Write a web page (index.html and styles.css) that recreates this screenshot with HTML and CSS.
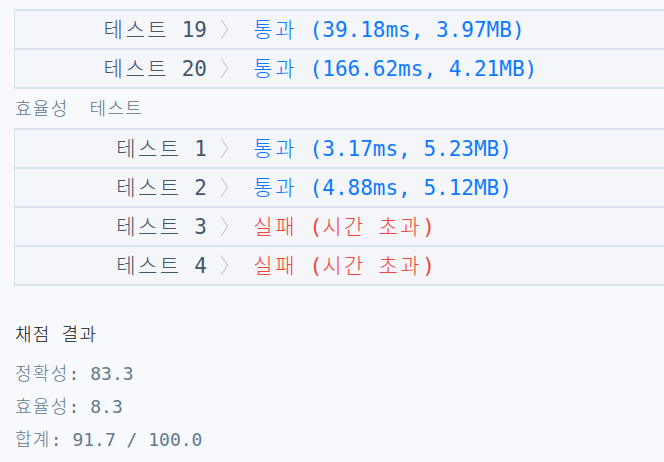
FILE: index.html
```html
<!DOCTYPE html>
<html lang="ko">
<head>
<meta charset="utf-8">
<link rel="stylesheet" href="styles.css">
</head>
<body>
<div class="page">
  <div class="panel first">
    <div class="row"><span class="label"><span class="k">테스트</span> 19</span><span class="res"> <span class="arrow">〉</span> <span class="pass"><span class="k">통과</span> (39.18ms, 3.97MB)</span></span></div>
    <div class="row"><span class="label"><span class="k">테스트</span> 20</span><span class="res"> <span class="arrow">〉</span> <span class="pass"><span class="k">통과</span> (166.62ms, 4.21MB)</span></span></div>
  </div>
  <div class="caption"><span class="k">효율성</span><span class="k">테스트</span></div>
  <div class="panel">
    <div class="row"><span class="label"><span class="k">테스트</span> 1</span><span class="res"> <span class="arrow">〉</span> <span class="pass"><span class="k">통과</span> (3.17ms, 5.23MB)</span></span></div>
    <div class="row"><span class="label"><span class="k">테스트</span> 2</span><span class="res"> <span class="arrow">〉</span> <span class="pass"><span class="k">통과</span> (4.88ms, 5.12MB)</span></span></div>
    <div class="row"><span class="label"><span class="k">테스트</span> 3</span><span class="res"> <span class="arrow">〉</span> <span class="fail"><span class="k">실패</span> (<span class="k">시간</span> <span class="k">초과</span>)</span></span></div>
    <div class="row"><span class="label"><span class="k">테스트</span> 4</span><span class="res"> <span class="arrow">〉</span> <span class="fail"><span class="k">실패</span> (<span class="k">시간</span> <span class="k">초과</span>)</span></span></div>
  </div>
  <div class="summary-title"><span class="k">채점</span> <span class="k">결과</span></div>
  <div class="score"><span class="k">정확성</span>: 83.3</div>
  <div class="score"><span class="k">효율성</span>: 8.3</div>
  <div class="score"><span class="k">합계</span>: 91.7 / 100.0</div>
</div>
</body>
</html>
```

FILE: styles.css
```css
html, body {
  margin: 0;
  padding: 0;
  background: #f8f9fc;
  overflow: hidden;
}
body {
  font-family: "DejaVu Sans Mono", "Noto Sans CJK KR", monospace;
}
.page {
  padding-left: 14px;
}
.panel {
  border-top: 2px solid #d7e2eb;
  border-left: 1px solid #d7e2eb;
  background: #f5f6fa;
}
.panel.first {
  margin-top: 9px;
}
.row {
  display: flex;
  align-items: center;
  height: 34px;
  padding-bottom: 3px;
  border-bottom: 2px solid #d7e2eb;
  font-size: 21px;
  white-space: pre;
}
.row .k {
  letter-spacing: 2.5px;
  font-weight: 300;
}
.label {
  width: 192px;
  text-align: right;
  color: #44566b;
  flex: none;
}
.arrow {
  color: #c3c8cf;
  font-weight: 300;
}
.pass {
  color: #0c7aff;
}
.fail {
  color: #f2453a;
}
.caption {
  height: 39px;
  line-height: 39px;
  font-size: 18px;
  color: #5b7587;
  display: flex;
  gap: 21px;
  padding-left: 1px;
}
.caption .k,
.summary-title .k,
.score .k {
  letter-spacing: 1.3px;
  font-weight: 300;
}
.summary-title {
  margin-top: 32px;
  margin-bottom: 5px;
  line-height: 34px;
  font-size: 18px;
  color: #111;
  padding-left: 1px;
  white-space: pre;
}
.score {
  line-height: 33px;
  font-size: 18px;
  color: #5f7a8c;
  padding-left: 1px;
  white-space: pre;
}
```
